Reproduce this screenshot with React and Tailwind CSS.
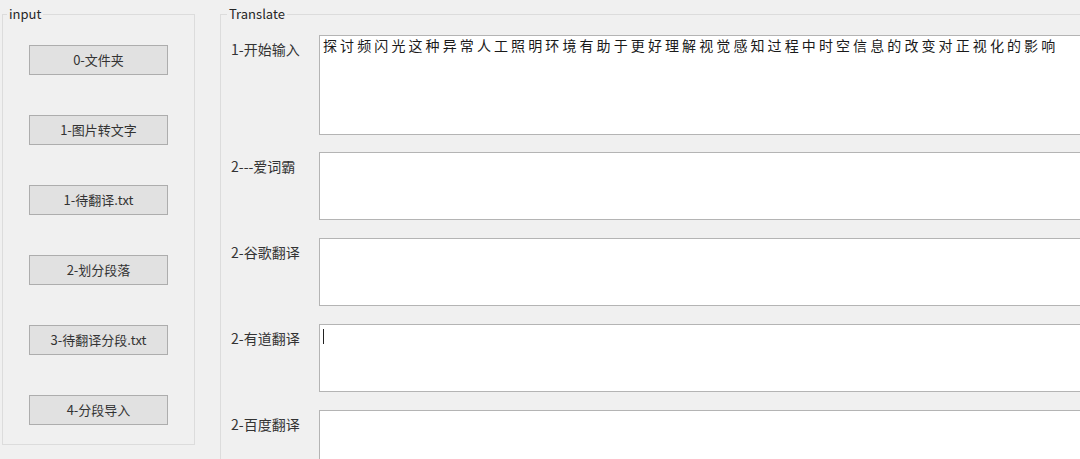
const font = { fontFamily: '"Noto Sans CJK SC", "Noto Sans", sans-serif' };

const buttons = ["0-文件夹", "1-图片转文字", "1-待翻译.txt", "2-划分段落", "3-待翻译分段.txt", "4-分段导入"];

const rows = [
  { label: "1-开始输入", h: "h-[100px]", mt: "mt-0", text: "探讨频闪光这种异常人工照明环境有助于更好理解视觉感知过程中时空信息的改变对正视化的影响" },
  { label: "2---爱词霸", h: "h-[68px]", mt: "mt-[17px]" },
  { label: "2-谷歌翻译", h: "h-[68px]", mt: "mt-[18px]" },
  { label: "2-有道翻译", h: "h-[68px]", mt: "mt-[18px]", caret: true },
  { label: "2-百度翻译", h: "h-[68px]", mt: "mt-[18px]" },
];

export default function App() {
  return (
    <div
      className="w-[1080px] h-[459px] overflow-hidden bg-[#f0f0f0] text-[#262626] flex items-start"
      style={font}
    >
      {/* input group */}
      <fieldset className="shrink-0 ml-[2px] mt-[6px] w-[193px] h-[439px] border border-[#dcdcdc] flex flex-col items-center pt-[23px] gap-[40px]">
        <legend className="ml-[4px] px-[2px] text-[13px] leading-[16px]">input</legend>
        {buttons.map((b) => (
          <button
            key={b}
            className="w-[139px] h-[30px] shrink-0 bg-[#e1e1e1] border border-[#adadad] text-[13px] leading-[16px] text-[#333]"
          >
            {b}
          </button>
        ))}
      </fieldset>

      {/* translate group */}
      <fieldset className="shrink-0 ml-[25px] mt-[6px] w-[900px] h-[470px] border border-[#dcdcdc] pt-[13px]">
        <legend className="ml-[6px] px-[2px] text-[13px] leading-[16px]">Translate</legend>
        <div className="pl-[10px]">
          {rows.map((r) => (
            <div key={r.label} className={`flex items-start ${r.mt}`}>
              <div className="w-[88px] shrink-0 pt-[6px] text-[14px] leading-[16px] text-[#333]">{r.label}</div>
              <div className={`flex-1 ${r.h} bg-white border border-[#b4b4b4] px-[3px] pt-[1px] text-[14px] leading-[16px] tracking-[3.1px] whitespace-nowrap text-[#1a1a1a]`}>
                {r.text}
                {r.caret && <span className="inline-block w-[1px] h-[15px] bg-[#222] mt-[3px]" />}
              </div>
            </div>
          ))}
        </div>
      </fieldset>
    </div>
  );
}
